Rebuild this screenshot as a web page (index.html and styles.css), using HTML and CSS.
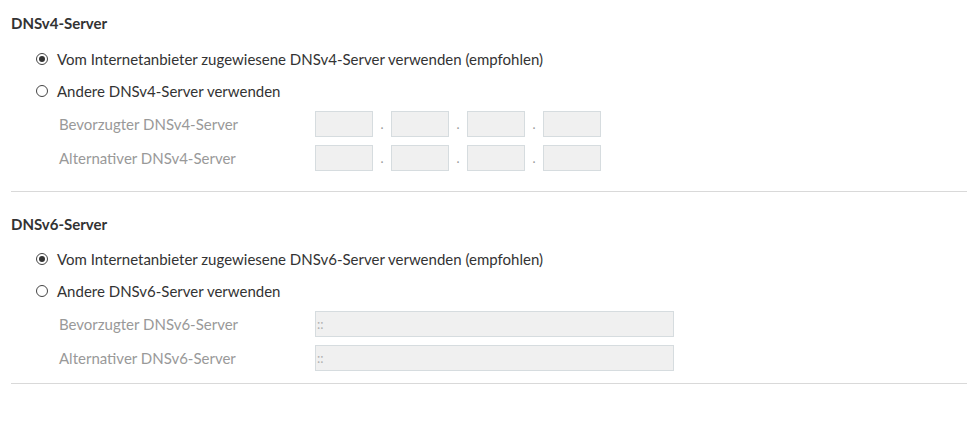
FILE: index.html
```html
<!DOCTYPE html>
<html lang="de">
<head>
<meta charset="utf-8">
<title>DNS-Server</title>
<link rel="stylesheet" href="styles.css">
</head>
<body>
<section class="section first">
  <h3 class="heading">DNSv4-Server</h3>
  <div class="options">
    <label class="option"><span class="radio checked"></span><span>Vom Internetanbieter zugewiesene DNSv4-Server verwenden (empfohlen)</span></label>
    <label class="option"><span class="radio"></span><span>Andere DNSv4-Server verwenden</span></label>
  </div>
  <div class="fields">
    <div class="field">
      <span class="field-label">Bevorzugter DNSv4-Server</span>
      <div class="ip4">
        <span class="box"></span><span class="dot">.</span><span class="box"></span><span class="dot">.</span><span class="box"></span><span class="dot">.</span><span class="box"></span>
      </div>
    </div>
    <div class="field">
      <span class="field-label">Alternativer DNSv4-Server</span>
      <div class="ip4">
        <span class="box"></span><span class="dot">.</span><span class="box"></span><span class="dot">.</span><span class="box"></span><span class="dot">.</span><span class="box"></span>
      </div>
    </div>
  </div>
</section>
<section class="section second">
  <h3 class="heading">DNSv6-Server</h3>
  <div class="options">
    <label class="option"><span class="radio checked"></span><span>Vom Internetanbieter zugewiesene DNSv6-Server verwenden (empfohlen)</span></label>
    <label class="option"><span class="radio"></span><span>Andere DNSv6-Server verwenden</span></label>
  </div>
  <div class="fields">
    <div class="field">
      <span class="field-label">Bevorzugter DNSv6-Server</span>
      <span class="box wide">::</span>
    </div>
    <div class="field">
      <span class="field-label">Alternativer DNSv6-Server</span>
      <span class="box wide">::</span>
    </div>
  </div>
</section>
</body>
</html>
```
FILE: styles.css
```css
html, body {
  margin: 0;
  padding: 0;
  background: #ffffff;
}
body {
  font-family: "Lato", "Liberation Sans", sans-serif;
  font-size: 15px;
  color: #333333;
}
.section {
  margin-left: 11px;
  padding-top: 22px;
  border-bottom: 1px solid #d9d9d9;
}
.section.first {
  padding-top: 13px;
  padding-bottom: 20px;
}
.section.second {
  padding-bottom: 12px;
}
.heading {
  margin: 0;
  font-size: 15px;
  line-height: 20px;
  font-weight: 700;
  color: #333333;
}
.options {
  margin-top: 10px;
  padding-left: 25px;
}
.second .options {
  margin-top: 9px;
}
.option {
  display: flex;
  align-items: center;
  height: 32px;
  gap: 9px;
  line-height: 20px;
}
.option span:last-child {
  margin-top: -1px;
}
.radio {
  box-sizing: border-box;
  width: 12px;
  height: 12px;
  border: 1px solid #444444;
  border-radius: 50%;
  display: flex;
  align-items: center;
  justify-content: center;
  flex: none;
}
.radio.checked::after {
  content: "";
  width: 6px;
  height: 6px;
  border-radius: 50%;
  background: #333333;
}
.fields {
  margin-top: 4px;
  padding-left: 48px;
  display: flex;
  flex-direction: column;
  gap: 8px;
}
.field {
  display: flex;
  align-items: center;
  height: 26px;
}
.field-label {
  width: 256px;
  color: #999999;
  margin-top: -1px;
}
.ip4 {
  display: flex;
  align-items: center;
}
.box {
  box-sizing: border-box;
  display: block;
  width: 58px;
  height: 26px;
  background: #f0f0f0;
  border: 1px solid #d6dcdf;
}
.box.wide {
  width: 359px;
  font-size: 13px;
  line-height: 24px;
  padding-left: 1px;
  color: #b0b0b0;
}
.dot {
  width: 18px;
  text-align: center;
  color: #9a9a9a;
  font-size: 13px;
  line-height: 26px;
}
```
